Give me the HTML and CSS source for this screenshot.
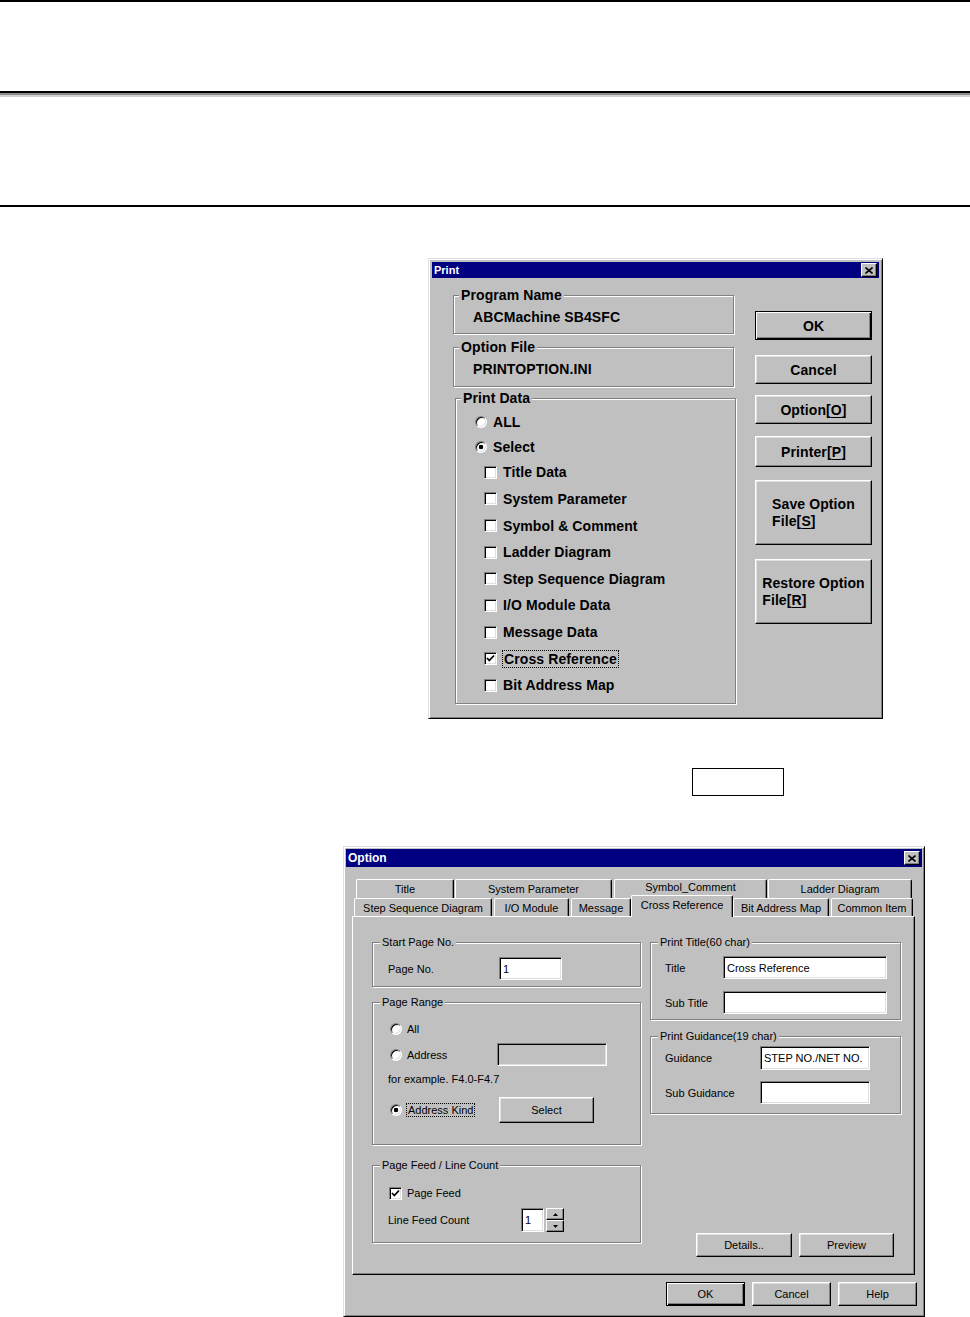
FILE: index.html
```html
<!DOCTYPE html>
<html lang="en">
<head>
  <meta charset="UTF-8" />
  <title>Print / Option dialogs</title>
  <link rel="stylesheet" href="styles.css">
</head>
<body>
  <!-- ===== page rules ===== -->
  <div class="rule-top"></div>
  <div class="rule-double"></div>
  <div class="rule"></div>

  <!-- ===== Print dialog ===== -->
  <div class="win print-dlg">
    <div class="caption">
      <span>Print</span>
      <span class="close"><svg width="8" height="7" viewBox="0 0 8 7"><path d="M0.5 0.5L7.5 6.5M7.5 0.5L0.5 6.5" stroke="#000" stroke-width="1.6"/></svg></span>
    </div>
    <div class="print-body">
      <div class="print-left">
        <div class="group pg pg1">
          <span class="group-title">Program Name</span>
          <div class="pg-value">ABCMachine SB4SFC</div>
        </div>
        <div class="group pg pg2">
          <span class="group-title">Option File</span>
          <div class="pg-value">PRINTOPTION.INI</div>
        </div>
        <div class="group pg pg3">
          <span class="group-title">Print Data</span>
          <div class="pd-list">
            <div class="pd-radio"><span class="radio"></span>ALL</div>
            <div class="pd-radio"><span class="radio on"></span>Select</div>
            <div class="pd-check"><span class="check"></span>Title Data</div>
            <div class="pd-check"><span class="check"></span>System Parameter</div>
            <div class="pd-check"><span class="check"></span>Symbol &amp; Comment</div>
            <div class="pd-check"><span class="check"></span>Ladder Diagram</div>
            <div class="pd-check"><span class="check"></span>Step Sequence Diagram</div>
            <div class="pd-check"><span class="check"></span>I/O Module Data</div>
            <div class="pd-check"><span class="check"></span>Message Data</div>
            <div class="pd-check"><span class="check"><svg width="9" height="9" viewBox="0 0 9 9"><polyline points="1,4 3.3,6.5 8,1.5" fill="none" stroke="#000" stroke-width="1.8"/></svg></span><span class="focus">Cross Reference</span></div>
            <div class="pd-check"><span class="check"></span>Bit Address Map</div>
          </div>
        </div>
      </div>
      <div class="print-right">
        <div class="btn default b-ok">OK</div>
        <div class="btn b-cancel">Cancel</div>
        <div class="btn b-option">Option[<u>O</u>]</div>
        <div class="btn b-printer">Printer[<u>P</u>]</div>
        <div class="btn b-tall b-save"><span class="stack">Save Option<br>File[<u>S</u>]</span></div>
        <div class="btn b-tall b-restore"><span class="stack">Restore Option<br>File[<u>R</u>]</span></div>
      </div>
    </div>
  </div>

  <div class="blank-box"></div>

  <!-- ===== Option dialog ===== -->
  <div class="win opt-dlg">
    <div class="caption caption-lg">
      <span>Option</span>
      <span class="close"><svg width="8" height="7" viewBox="0 0 8 7"><path d="M0.5 0.5L7.5 6.5M7.5 0.5L0.5 6.5" stroke="#000" stroke-width="1.6"/></svg></span>
    </div>

    <div class="tabs">
      <div class="tab-row row1">
        <div class="tab" style="width:98px">Title</div>
        <div class="tab" style="width:157px">System Parameter</div>
        <div class="tab tab-up" style="width:153px">Symbol_Comment</div>
        <div class="tab" style="width:144px">Ladder Diagram</div>
      </div>
      <div class="tab-row row2">
        <div class="tab" style="width:138px">Step Sequence Diagram</div>
        <div class="tab" style="width:75px">I/O Module</div>
        <div class="tab" style="width:60px">Message</div>
        <div class="tab active" style="width:102px">Cross Reference</div>
        <div class="tab" style="width:96px">Bit Address Map</div>
        <div class="tab" style="width:82px">Common Item</div>
      </div>

      <div class="tab-panel">
        <div class="col-left">
          <div class="group og og1">
            <span class="group-title">Start Page No.</span>
            <div class="orow r-page">
              <span class="olabel" style="width:111px">Page No.</span>
              <div class="field" style="width:63px">1</div>
            </div>
          </div>

          <div class="group og og2">
            <span class="group-title">Page Range</span>
            <div class="orow r-all">
              <span class="rlabel"><span class="radio"></span>All</span>
            </div>
            <div class="orow r-addr">
              <span class="rlabel"><span class="radio"></span>Address</span>
              <div class="field disabled" style="width:110px"></div>
            </div>
            <div class="note">for example. F4.0-F4.7</div>
            <div class="orow r-kind">
              <span class="rlabel rlabel-wide"><span class="radio on"></span><span class="focus">Address Kind</span></span>
              <div class="btn obtn" style="width:95px;height:26px">Select</div>
            </div>
          </div>

          <div class="group og og3">
            <span class="group-title">Page Feed / Line Count</span>
            <div class="orow r-feed">
              <span class="check"><svg width="9" height="9" viewBox="0 0 9 9"><polyline points="1,4 3.3,6.5 8,1.5" fill="none" stroke="#000" stroke-width="1.8"/></svg></span>
              <span class="clabel">Page Feed</span>
            </div>
            <div class="orow r-lines">
              <span class="olabel" style="width:133px">Line Feed Count</span>
              <div class="field" style="width:23px;height:24px">1</div>
              <div class="spin">
                <span class="spin-btn"><svg width="5" height="3" viewBox="0 0 5 3"><path d="M2.5 0L5 3H0Z"/></svg></span>
                <span class="spin-btn"><svg width="5" height="3" viewBox="0 0 5 3"><path d="M0 0H5L2.5 3Z"/></svg></span>
              </div>
            </div>
          </div>
        </div>

        <div class="col-right">
          <div class="group og og4">
            <span class="group-title">Print Title(60 char)</span>
            <div class="orow r-title">
              <span class="olabel" style="width:58px">Title</span>
              <div class="field" style="width:164px">Cross Reference</div>
            </div>
            <div class="orow r-subtitle">
              <span class="olabel" style="width:58px">Sub Title</span>
              <div class="field" style="width:164px"></div>
            </div>
          </div>

          <div class="group og og5">
            <span class="group-title">Print Guidance(19 char)</span>
            <div class="orow r-guide">
              <span class="olabel" style="width:95px">Guidance</span>
              <div class="field" style="width:110px;height:24px">STEP NO./NET NO.</div>
            </div>
            <div class="orow r-subguide">
              <span class="olabel" style="width:95px">Sub Guidance</span>
              <div class="field" style="width:110px"></div>
            </div>
          </div>

          <div class="panel-btns">
            <div class="btn obtn" style="width:96px">Details..</div>
            <div class="btn obtn" style="width:95px">Preview</div>
          </div>
        </div>
      </div>
    </div>

    <div class="dlg-foot">
      <div class="btn obtn default">OK</div>
      <div class="btn obtn">Cancel</div>
      <div class="btn obtn">Help</div>
    </div>
  </div>
</body>
</html>
```

FILE: styles.css
```css
:root {
  --face: #c0c0c0;
  --hi: #ffffff;
  --light: #dfdfdf;
  --shadow: #808080;
  --dark: #000000;
  --title: #000080;
}

/* ===== Page ===== */
*, *::before, *::after { box-sizing: border-box; }
body {
  margin: 0;
  background: #fff;
  color: #000;
  font-family: "Liberation Sans", Arial, sans-serif;
}
.rule-top { height: 2px; background: #000; }
.rule-double {
  margin-top: 89px;
  height: 6px;
  background: linear-gradient(#000 0 2px, #8c8c8c 2px 4px, #d2d2d2 4px 6px);
}
.rule { margin-top: 108px; height: 2px; background: #000; }
.blank-box {
  margin: 49px 0 0 692px;
  width: 92px;
  height: 28px;
  border: 1px solid #000;
}

/* ===== Win95 chrome ===== */
.win {
  background: var(--face);
  border: 1px solid;
  border-color: var(--light) var(--dark) var(--dark) var(--light);
  box-shadow: inset 1px 1px var(--hi), inset -1px -1px var(--shadow);
}
.caption {
  display: flex;
  align-items: center;
  justify-content: space-between;
  height: 16px;
  padding: 0 2px;
  background: var(--title);
  color: #fff;
  font-size: 11px;
  font-weight: bold;
}
.caption-lg { height: 18px; font-size: 12px; }
.close {
  display: flex;
  align-items: center;
  justify-content: center;
  width: 16px;
  height: 14px;
  background: var(--face);
  border: 1px solid;
  border-color: var(--hi) var(--dark) var(--dark) var(--hi);
  box-shadow: inset -1px -1px var(--shadow);
}
.btn {
  display: flex;
  align-items: center;
  justify-content: center;
  background: var(--face);
  border: 1px solid;
  border-color: var(--hi) var(--dark) var(--dark) var(--hi);
  box-shadow: inset -1px -1px var(--shadow), inset 1px 1px var(--light);
}
.btn.default {
  border-color: var(--dark);
  box-shadow: inset 1px 1px var(--hi), inset -1px -1px var(--dark), inset -2px -2px var(--shadow);
}
.group {
  border: 1px solid var(--shadow);
  box-shadow: inset 1px 1px var(--hi), 1px 1px var(--hi);
}
.group-title {
  display: block;
  width: max-content;
  padding: 0 2px;
  background: var(--face);
}
.radio {
  display: inline-block;
  flex: none;
  width: 12px;
  height: 12px;
  border-radius: 50%;
  background: #fff;
  border: 1px solid;
  border-color: var(--shadow) var(--hi) var(--hi) var(--shadow);
  box-shadow: inset 1px 1px var(--dark), inset -1px -1px var(--light);
}
.radio.on { background: radial-gradient(circle, #000 0 2px, #fff 2.6px); }
.check {
  display: inline-flex;
  flex: none;
  align-items: center;
  justify-content: center;
  width: 13px;
  height: 13px;
  background: #fff;
  border: 1px solid;
  border-color: var(--shadow) var(--hi) var(--hi) var(--shadow);
  box-shadow: inset 1px 1px var(--dark), inset -1px -1px var(--light);
}
.focus { outline: 1px dotted #000; outline-offset: 0; padding: 0 1px; }
u { text-underline-offset: 2px; }

/* ===== Print dialog ===== */
.print-dlg {
  margin: 51px 0 0 428px;
  width: 455px;
  height: 461px;
  padding: 3px;
}
.print-body { display: flex; font-size: 14px; font-weight: bold; letter-spacing: 0.1px; }
.print-left { width: 283px; margin-left: 21px; }
.pg { width: 281px; }
.pg .group-title { line-height: 16px; margin: -9px 0 0 5px; }
.pg-value { line-height: 16px; margin: 6px 0 0 19px; }
.pg1 { margin-top: 17px; padding-bottom: 8px; }
.pg2 { margin-top: 13px; padding-bottom: 9px; }
.pg3 { margin: 11px 0 0 2px; padding-bottom: 4px; }
.pd-list { margin-top: 3px; }
.pd-radio { display: flex; align-items: center; gap: 6px; height: 25px; padding-left: 19px; }
.pd-check { display: flex; align-items: center; gap: 6px; height: 26.625px; padding-left: 28px; }

.print-right {
  display: flex;
  flex-direction: column;
  width: 117px;
  margin-left: 19px;
  padding-top: 33px;
}
.b-ok { height: 29px; }
.b-cancel { height: 29px; margin-top: 15px; }
.b-option { height: 29px; margin-top: 11px; }
.b-printer { height: 31px; margin-top: 12px; }
.b-save { height: 65px; margin-top: 13px; }
.b-restore { height: 65px; margin-top: 14px; }
.stack { text-align: left; line-height: 17px; }

/* ===== Option dialog ===== */
.opt-dlg {
  margin: 50px 0 0 343px;
  width: 582px;
  height: 471px;
  padding: 2px;
  font-size: 11px;
}
.tabs { margin: 12px 0 0 6px; }
.tab-row { display: flex; }
.row1 { height: 19px; margin-left: 4px; gap: 1px; }
.row1 .tab:nth-child(2) { margin-right: 1px; }
.row2 { height: 18px; margin-left: 2px; gap: 2px; }
.tab {
  display: flex;
  align-items: center;
  justify-content: center;
  height: 100%;
  background: var(--face);
  border: 1px solid;
  border-bottom: none;
  border-color: var(--hi) var(--dark) var(--dark) var(--hi);
  border-radius: 2px 2px 0 0;
  box-shadow: inset -1px 0 var(--shadow);
  white-space: nowrap;
}
.tab-up { padding-bottom: 4px; }
.tab.active {
  position: relative;
  z-index: 1;
  height: 22px;
  margin: -3px -2px 0 -2px;
  padding-bottom: 3px;
}
.tab-panel {
  display: flex;
  gap: 9px;
  width: 563px;
  height: 359px;
  padding: 25px 0 0 19px;
  border: 1px solid;
  border-color: var(--hi) var(--dark) var(--dark) var(--hi);
  box-shadow: inset -1px -1px var(--shadow);
}
.col-left { width: 269px; }
.col-right { width: 251px; display: flex; flex-direction: column; }

.og .group-title { line-height: 14px; margin: -8px 0 0 7px; }
.orow { display: flex; align-items: center; }
.olabel { flex: none; }
.field {
  display: flex;
  align-items: center;
  flex: none;
  height: 23px;
  padding: 0 3px;
  background: #fff;
  border: 1px solid;
  border-color: var(--shadow) var(--hi) var(--hi) var(--shadow);
  box-shadow: inset 1px 1px var(--dark), inset -1px -1px var(--light);
  white-space: nowrap;
  overflow: hidden;
}
.field.disabled { background: var(--face); }
.obtn { height: 24px; }
.rlabel { display: flex; align-items: center; gap: 5px; width: 109px; padding-left: 2px; }
.rlabel-wide { width: 111px; }
.note { line-height: 14px; margin-top: 6px; }

.og1 { padding: 0 0 6px 15px; height: 45px; }
.og1 .group-title { margin-left: -8px; }
.r-page { margin-top: 8px; }
.og2 { margin-top: 15px; padding: 0 0 0 15px; height: 143px; }
.og2 .group-title { margin-left: -8px; }
.r-all { height: 16px; margin-top: 12px; }
.r-addr { height: 23px; margin-top: 6px; }
.r-kind { height: 26px; margin-top: 11px; }
.og3 { margin-top: 20px; padding: 0 0 0 15px; height: 78px; }
.og3 .group-title { margin-left: -8px; }
.r-feed { height: 16px; margin-top: 13px; padding-left: 1px; gap: 5px; }
.r-lines { height: 24px; margin-top: 7px; }
.spin { display: flex; flex-direction: column; margin-left: 2px; width: 18px; height: 24px; }
.spin-btn {
  display: flex;
  align-items: center;
  justify-content: center;
  height: 12px;
  background: var(--face);
  border: 1px solid;
  border-color: var(--hi) var(--dark) var(--dark) var(--hi);
  box-shadow: inset -1px -1px var(--shadow);
}

.og4 { padding-left: 14px; height: 78px; }
.og4 .group-title { margin-left: -7px; }
.r-title { margin-top: 7px; }
.r-subtitle { margin-top: 12px; }
.og5 { margin-top: 16px; padding-left: 14px; height: 78px; }
.og5 .group-title { margin-left: -7px; }
.r-guide { margin-top: 3px; }
.r-subguide { margin-top: 11px; }
.panel-btns {
  display: flex;
  justify-content: flex-end;
  gap: 7px;
  margin-top: 119px;
  padding-right: 7px;
}

.dlg-foot {
  display: flex;
  justify-content: flex-end;
  gap: 7px;
  margin: 7px 5px 0 0;
}
.dlg-foot .btn { width: 79px; }
```
